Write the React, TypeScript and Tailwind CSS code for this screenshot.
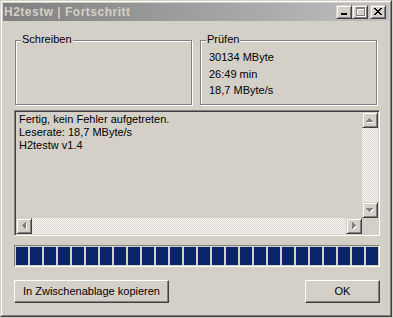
const raised =
  "border border-t-[#d4d0c8] border-l-[#d4d0c8] border-r-[#404040] border-b-[#404040] shadow-[inset_1px_1px_0_#ffffff,inset_-1px_-1px_0_#808080] bg-[#d4d0c8] p-px"
const pushButton =
  "border border-t-white border-l-white border-r-[#404040] border-b-[#404040] shadow-[inset_-1px_-1px_0_#808080] bg-[#d4d0c8] h-[23px] flex items-center justify-center"
const checker =
  "bg-[image:repeating-conic-gradient(#ffffff_0_25%,#d4d0c8_0_50%)] bg-[length:2px_2px]"

type Dir = "up" | "down" | "left" | "right"

const triRects = (dir: Dir, dx: number) =>
  [0, 1, 2, 3].map((i) => {
    if (dir === "up") return { x: 5 - i + dx, y: 4 + i + dx, w: 2 * i + 1, h: 1 }
    if (dir === "down") return { x: 5 - i + dx, y: 7 - i + dx, w: 2 * i + 1, h: 1 }
    if (dir === "left") return { x: 4 + i + dx, y: 5 - i + dx, w: 1, h: 2 * i + 1 }
    return { x: 7 - i + dx, y: 5 - i + dx, w: 1, h: 2 * i + 1 }
  })

const ScrollButton = ({ dir }: { dir: Dir }) => (
  <div className={`${raised} w-[16px] h-[16px] shrink-0`}>
    <svg width="12" height="12" shapeRendering="crispEdges" className="block">
      {triRects(dir, 1).map((r, i) => (
        <rect key={"s" + i} x={r.x} y={r.y} width={r.w} height={r.h} fill="#ffffff" />
      ))}
      {triRects(dir, 0).map((r, i) => (
        <rect key={i} x={r.x} y={r.y} width={r.w} height={r.h} fill="#808080" />
      ))}
    </svg>
  </div>
)

const CaptionButton = ({ children }: { children: React.ReactNode }) => (
  <div className={`${raised} w-[16px] h-[14px]`}>
    <svg width="12" height="10" shapeRendering="crispEdges" className="block">
      {children}
    </svg>
  </div>
)

const closeRows = [
  [0, 2, 6, 2],
  [1, 2, 5, 2],
  [2, 4],
  [3, 2],
  [2, 4],
  [1, 2, 5, 2],
  [0, 2, 6, 2],
]

const GroupBox = ({ label, children }: { label: string; children?: React.ReactNode }) => (
  <div className="relative w-[177px] h-[65px] border border-[#808080] shadow-[inset_1px_1px_0_#ffffff,1px_1px_0_#ffffff]">
    <span className="absolute top-[-8px] left-[5px] px-px bg-[#d4d0c8] leading-[13px]">{label}</span>
    {children}
  </div>
)

export default function App() {
  return (
    <div className="w-[393px] h-[318px] bg-[#d4d0c8] font-['Liberation_Sans',Arial,sans-serif] text-[11px] text-black">
      <div className="w-[392px] h-[317px] border border-t-[#d4d0c8] border-l-[#d4d0c8] border-r-[#404040] border-b-[#404040]">
        <div className="h-full border border-t-white border-l-white border-r-[#808080] border-b-[#808080] p-px flex flex-col">
          {/* title bar */}
          <div className="h-[18px] bg-linear-to-r from-[#808080] to-[#c0c0c0] flex items-center pl-px pr-[3px]">
            <span className="flex-1 font-bold text-[12px] tracking-[0.5px] leading-[18px] text-[#d4d0c8]">H2testw | Fortschritt</span>
            <CaptionButton>
              <rect x="3" y="6" width="6" height="2" fill="#000000" />
            </CaptionButton>
            <CaptionButton>
              <g fill="#ffffff">
                <rect x="3" y="1" width="9" height="2" />
                <rect x="3" y="1" width="1" height="9" />
                <rect x="11" y="1" width="1" height="9" />
                <rect x="3" y="9" width="9" height="1" />
              </g>
              <g fill="#808080">
                <rect x="2" y="0" width="9" height="2" />
                <rect x="2" y="0" width="1" height="9" />
                <rect x="10" y="0" width="1" height="9" />
                <rect x="2" y="8" width="9" height="1" />
              </g>
            </CaptionButton>
            <div className="w-[2px]" />
            <CaptionButton>
              {closeRows.map((row, y) =>
                row.length === 4 ? (
                  <g key={y}>
                    <rect x={2 + row[0]} y={1 + y} width={row[1]} height="1" fill="#000000" />
                    <rect x={2 + row[2]} y={1 + y} width={row[3]} height="1" fill="#000000" />
                  </g>
                ) : (
                  <rect key={y} x={2 + row[0]} y={1 + y} width={row[1]} height="1" fill="#000000" />
                )
              )}
            </CaptionButton>
          </div>

          {/* body */}
          <div className="flex flex-col pl-[11px]">
            <div className="flex mt-[19px] ml-px gap-[8px]">
              <GroupBox label="Schreiben" />
              <GroupBox label="Prüfen">
                <div className="flex flex-col pl-[8px] pt-[10px] leading-[13px]">
                  <span>30134 MByte</span>
                  <span className="mt-[4px]">26:49 min</span>
                  <span className="mt-[3px]">18,7 MByte/s</span>
                </div>
              </GroupBox>
            </div>

            {/* log */}
            <div className="mt-[5px] w-[366px] h-[126px] border border-t-[#808080] border-l-[#808080] border-r-white border-b-white shadow-[inset_1px_1px_0_#404040,inset_-1px_-1px_0_#d4d0c8] p-px flex flex-col">
              <div className="flex flex-1">
                <div className="flex-1 pl-[3px] pt-px leading-[13px] flex flex-col">
                  <span>Fertig, kein Fehler aufgetreten.</span>
                  <span>Leserate: 18,7 MByte/s</span>
                  <span>H2testw v1.4</span>
                </div>
                <div className="w-[16px] flex flex-col">
                  <ScrollButton dir="up" />
                  <div className={`flex-1 ${checker}`} />
                  <ScrollButton dir="down" />
                </div>
              </div>
              <div className="flex h-[16px]">
                <ScrollButton dir="left" />
                <div className={`flex-1 ${checker}`} />
                <ScrollButton dir="right" />
                <div className="w-[16px] bg-[#d4d0c8]" />
              </div>
            </div>

            {/* progress */}
            <div className="mt-[9px] w-[366px] h-[22px] border border-t-[#808080] border-l-[#808080] border-r-white border-b-white p-px flex gap-[2px]">
              {Array.from({ length: 26 }).map((_, i) => (
                <div key={i} className="w-[12px] h-[18px] bg-[#0a246a]" />
              ))}
            </div>

            {/* buttons */}
            <div className="mt-[13px] w-[366px] flex justify-between">
              <div className={`${pushButton} w-[155px]`}>In Zwischenablage kopieren</div>
              <div className={`${pushButton} w-[75px]`}>OK</div>
            </div>
          </div>
        </div>
      </div>
    </div>
  )
}
